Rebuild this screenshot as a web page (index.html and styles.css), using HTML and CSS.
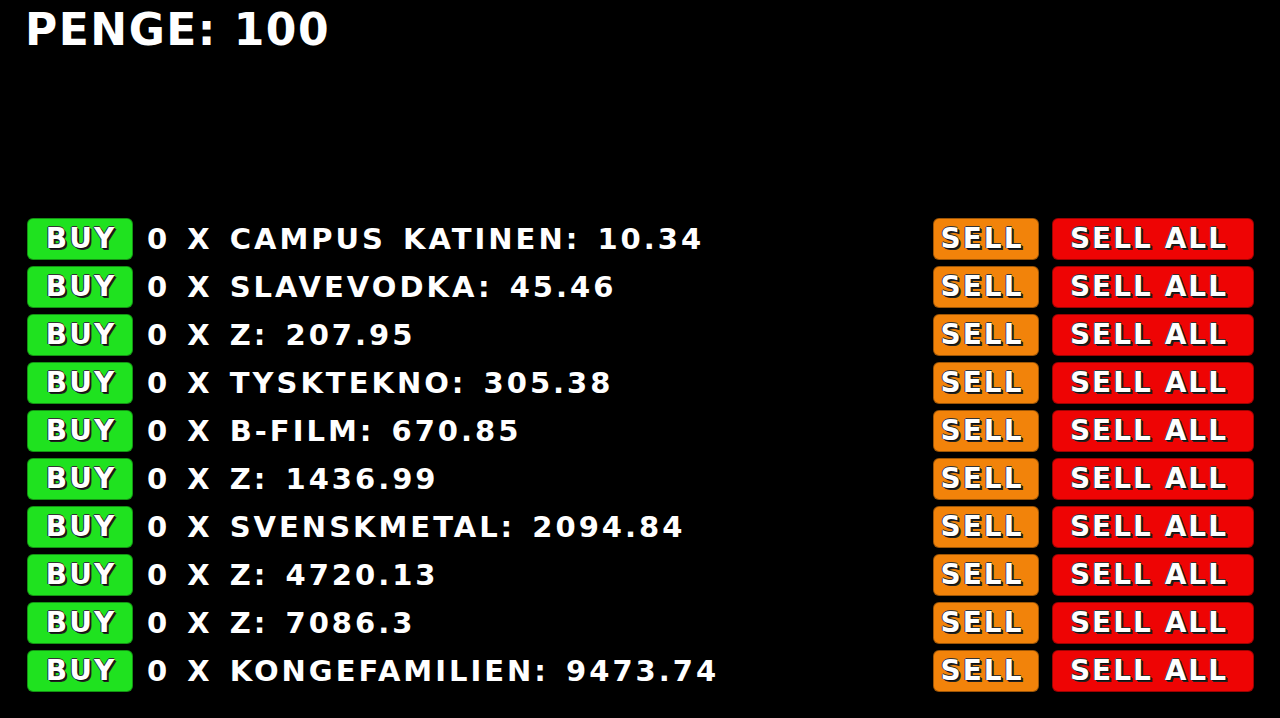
FILE: index.html
```html
<!DOCTYPE html>
<html>
<head>
<meta charset="utf-8">
<link rel="stylesheet" href="styles.css">
</head>
<body>
<div class="title">PENGE: 100</div>
<div class="rows">
  <div class="row"><div class="btn buy">BUY</div><div class="label">0 X CAMPUS KATINEN: 10.34</div><div class="btn sell">SELL</div><div class="btn sellall">SELL ALL</div></div>
  <div class="row"><div class="btn buy">BUY</div><div class="label">0 X SLAVEVODKA: 45.46</div><div class="btn sell">SELL</div><div class="btn sellall">SELL ALL</div></div>
  <div class="row"><div class="btn buy">BUY</div><div class="label">0 X Z: 207.95</div><div class="btn sell">SELL</div><div class="btn sellall">SELL ALL</div></div>
  <div class="row"><div class="btn buy">BUY</div><div class="label">0 X TYSKTEKNO: 305.38</div><div class="btn sell">SELL</div><div class="btn sellall">SELL ALL</div></div>
  <div class="row"><div class="btn buy">BUY</div><div class="label">0 X B-FILM: 670.85</div><div class="btn sell">SELL</div><div class="btn sellall">SELL ALL</div></div>
  <div class="row"><div class="btn buy">BUY</div><div class="label">0 X Z: 1436.99</div><div class="btn sell">SELL</div><div class="btn sellall">SELL ALL</div></div>
  <div class="row"><div class="btn buy">BUY</div><div class="label">0 X SVENSKMETAL: 2094.84</div><div class="btn sell">SELL</div><div class="btn sellall">SELL ALL</div></div>
  <div class="row"><div class="btn buy">BUY</div><div class="label">0 X Z: 4720.13</div><div class="btn sell">SELL</div><div class="btn sellall">SELL ALL</div></div>
  <div class="row"><div class="btn buy">BUY</div><div class="label">0 X Z: 7086.3</div><div class="btn sell">SELL</div><div class="btn sellall">SELL ALL</div></div>
  <div class="row"><div class="btn buy">BUY</div><div class="label">0 X KONGEFAMILIEN: 9473.74</div><div class="btn sell">SELL</div><div class="btn sellall">SELL ALL</div></div>
</div>
</body>
</html>
```
FILE: styles.css
```css
html, body {
  margin: 0;
  padding: 0;
  background: #000;
  height: 100%;
}
body {
  font-family: "DejaVu Sans", "Liberation Sans", sans-serif;
  font-weight: bold;
  color: #fff;
  overflow: hidden;
}
.title {
  font-size: 44px;
  line-height: 44px;
  letter-spacing: 1.5px;
  padding: 8px 0 0 25px;
  white-space: nowrap;
}
.rows {
  margin-top: 166px;
  padding: 0 26px 0 27px;
  display: flex;
  flex-direction: column;
  gap: 6px;
}
.row {
  display: grid;
  grid-template-columns: 106px 1fr 106px 202px;
  column-gap: 13px;
  height: 42px;
  align-items: center;
}
.label {
  font-size: 29px;
  line-height: 29px;
  letter-spacing: 3px;
  word-spacing: 4px;
  padding-left: 1px;
  white-space: nowrap;
}
.btn {
  height: 42px;
  box-sizing: border-box;
  border-radius: 6px;
  border: 1px solid rgba(0,0,0,0.35);
  display: flex;
  align-items: center;
  justify-content: center;
  font-size: 28px;
  line-height: 28px;
  letter-spacing: 2px;
  white-space: nowrap;
  text-shadow: 1px 1px 0 #111, 2px 2px 0 #222, -1px 0 0 #333, 0 -1px 0 #333;
}
.buy {
  background: #1fe21f;
  padding-left: 2px;
}
.sell {
  background: #f2830a;
  padding-right: 8px;
}
.sellall {
  background: #ee0404;
  padding-right: 8px;
}
```
